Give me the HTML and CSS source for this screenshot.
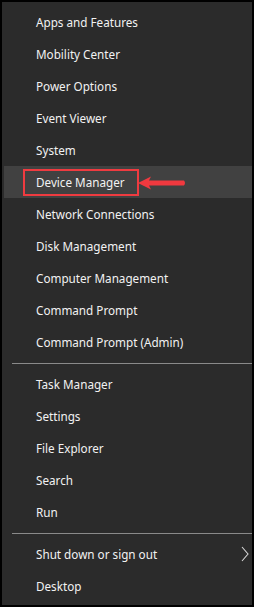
FILE: index.html
```html
<!DOCTYPE html>
<html lang="en">

<head>
    <meta charset="UTF-8">
    <meta name="viewport" content="width=device-width, initial-scale=1.0">
    <title>Quick Link Menu</title>
    <link rel="stylesheet" href="styles.css">
</head>

<body>
    <!-- Win+X menu -->
    <div class="menu">
        <div class="item">Apps and Features</div>
        <div class="item">Mobility Center</div>
        <div class="item">Power Options</div>
        <div class="item">Event Viewer</div>
        <div class="item">System</div>
        <div class="item active">
            <span class="mark">Device Manager</span>
            <!-- red pointer arrow -->
            <svg class="pointer" width="50" height="16" viewBox="0 0 50 16">
                <path d="M1 8 L14 1.5 L12 5.5 L47 5.5 Q49 8 47 10.5 L12 10.5 L14 14.5 Z" fill="#f0393f"/>
            </svg>
        </div>
        <div class="item">Network Connections</div>
        <div class="item">Disk Management</div>
        <div class="item">Computer Management</div>
        <div class="item">Command Prompt</div>
        <div class="item">Command Prompt (Admin)</div>

        <div class="sep"></div>

        <div class="item">Task Manager</div>
        <div class="item">Settings</div>
        <div class="item">File Explorer</div>
        <div class="item">Search</div>
        <div class="item">Run</div>

        <div class="sep"></div>

        <div class="item">
            Shut down or sign out
            <svg class="chevron" width="8" height="16" viewBox="0 0 8 16">
                <path d="M1 1 L7 8 L1 15" fill="none" stroke="#d8d8d8" stroke-width="1.1"/>
            </svg>
        </div>
        <div class="item">Desktop</div>
    </div>
</body>

</html>
```

FILE: styles.css
```css
/* Quick link menu */
body {
    margin: 0;
    padding: 0;
    background-color: #000;
    font-family: "Noto Sans", "Open Sans", sans-serif;
}
.menu {
    width: 250px;
    height: 603px;
    margin: 2px;
    padding: 4px 0 4px 0;
    box-sizing: border-box;
    background-color: #2b2b2b;
    color: #f2f2f2;
    font-size: 11.7px;
}
.item {
    position: relative;
    display: flex;
    align-items: center;
    height: 32px;
    padding-left: 34px;
    box-sizing: border-box;
}
.item.active {
    background-color: #414141;
    margin-left: 2px;
    padding-left: 32px;
}
.item.active .mark {
    display: flex;
    align-items: center;
    height: 27px;
    margin-left: -13px;
    padding: 0 12px 0 11px;
    border: 2px solid #ef3b40;
    box-sizing: border-box;
}
.pointer {
    position: absolute;
    left: 133px;
    top: 9px;
}
.chevron {
    position: absolute;
    right: 3px;
    top: 8px;
}
/* Separator lines */
.sep {
    height: 1px;
    margin: 5px 0 4px 10px;
    background-color: #8a8a8a;
}
```
